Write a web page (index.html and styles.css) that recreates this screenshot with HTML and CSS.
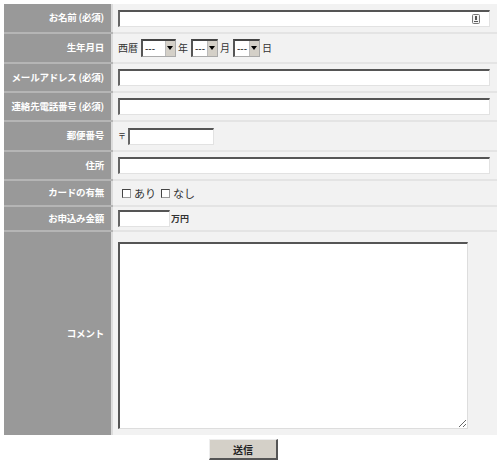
FILE: index.html
```html
<!DOCTYPE html>
<html lang="ja">
<head>
<meta charset="utf-8">
<link rel="stylesheet" href="styles.css">
</head>
<body>
<form class="form">
<table class="tbl">
  <tr class="r1">
    <th>お名前 (必須)</th>
    <td><span class="wrap"><input class="txt full" type="text"><svg class="ime" width="8" height="10" viewBox="0 0 8 10"><rect x="0.5" y="0.5" width="7" height="9" rx="1" fill="#f4f4f4" stroke="#777"/><rect x="3" y="2" width="2" height="4" fill="#555"/><rect x="2" y="7" width="4" height="1" fill="#555"/></svg></span></td>
  </tr>
  <tr class="r2">
    <th>生年月日</th>
    <td><span class="inl">西暦</span><span class="sel w35"><select><option>---</option></select></span><span class="inl">年</span><span class="sel w27"><select><option>---</option></select></span><span class="inl">月</span><span class="sel w27"><select><option>---</option></select></span><span class="inl">日</span></td>
  </tr>
  <tr class="r3">
    <th>メールアドレス (必須)</th>
    <td><input class="txt full" type="text"></td>
  </tr>
  <tr class="r4">
    <th>連絡先電話番号 (必須)</th>
    <td><input class="txt full" type="text"></td>
  </tr>
  <tr class="r5">
    <th>郵便番号</th>
    <td><span class="zip">〒</span><input class="txt zipin" type="text"></td>
  </tr>
  <tr class="r6">
    <th>住所</th>
    <td><input class="txt full" type="text"></td>
  </tr>
  <tr class="r7">
    <th>カードの有無</th>
    <td><label class="chk"><span class="box"></span>あり</label><label class="chk"><span class="box"></span>なし</label></td>
  </tr>
  <tr class="r8">
    <th>お申込み金額</th>
    <td><input class="txt amt" type="text"><span class="unit">万円</span></td>
  </tr>
  <tr class="r9">
    <th>コメント</th>
    <td><textarea class="area"></textarea></td>
  </tr>
</table>
<div class="actions"><button type="button" class="submit">送信</button></div>
</form>
</body>
</html>
```

FILE: styles.css
```css
* { box-sizing: border-box; }
html, body { margin: 0; padding: 0; background: #fff; }
body {
  padding: 4px;
  font-family: "Noto Sans CJK JP", "Liberation Sans", sans-serif;
  font-size: 10px;
  color: #333;
}
.form { margin: 0; }
.tbl {
  width: 493px;
  border-collapse: collapse;
  border-spacing: 0;
}
.tbl th, .tbl td {
  padding: 0;
  vertical-align: middle;
}
.tbl th {
  width: 109px;
  background: #999;
  color: #fff;
  font-weight: bold;
  font-size: 9.5px;
  letter-spacing: -0.2px;
  text-align: right;
  padding-right: 7px;
  white-space: nowrap;
  border-bottom: 2px solid #b5b5b5;
  line-height: 1;
}
.tbl td {
  background: #f2f2f2;
  border-left: 2px solid #dcdcdc;
  border-bottom: 2px solid #e4e4e4;
  padding-left: 5px;
  padding-right: 7px;
  line-height: 1;
}
.r1 th, .r1 td { height: 29px; }
.r2 th, .r2 td { height: 30px; }
.r3 th, .r3 td { height: 29px; }
.r4 th, .r4 td { height: 29px; }
.r5 th, .r5 td { height: 30px; }
.r6 th, .r6 td { height: 29px; }
.r7 th, .r7 td { height: 26px; }
.r8 th, .r8 td { height: 25px; }
.r9 th, .r9 td { height: 204px; border-bottom: 0; }

.txt {
  display: inline-block;
  vertical-align: middle;
  height: 17px;
  margin: 0;
  padding: 0 3px;
  background: #fff;
  border-top: 2px solid #555;
  border-left: 2px solid #666;
  border-right: 1px solid #e2e2e2;
  border-bottom: 1px solid #e2e2e2;
  outline: none;
  font: inherit;
}
.full { width: 372px; }
.wrap { position: relative; display: inline-block; vertical-align: middle; line-height: 0; }
.ime { position: absolute; right: 10px; top: 4px; }

.inl { display: inline-block; vertical-align: middle; margin: 0 3px 0 0; }
.sel {
  position: relative;
  display: inline-block;
  vertical-align: middle;
  height: 18px;
  margin-right: 2px;
  background: #fff;
  border-top: 2px solid #444;
  border-left: 2px solid #555;
  border-right: 1px solid #aaa;
  border-bottom: 1px solid #aaa;
}
.sel select {
  -webkit-appearance: none;
  appearance: none;
  border: 0;
  margin: 0;
  padding: 0 0 0 2px;
  height: 15px;
  width: 100%;
  background: transparent;
  font-family: "Liberation Sans", sans-serif;
  font-size: 10px;
  color: #333;
  outline: none;
}
.sel::after {
  content: "";
  position: absolute;
  top: 0;
  right: 0;
  width: 9px;
  height: 15px;
  background: #d4d0c8;
  border-left: 1px solid #bbb;
}
.sel::before {
  content: "";
  position: absolute;
  z-index: 1;
  top: 5px;
  right: 2px;
  border-left: 3px solid transparent;
  border-right: 3px solid transparent;
  border-top: 4px solid #000;
}
.w35 { width: 35px; }
.w27 { width: 27px; }

.zip { display: inline-block; vertical-align: middle; font-size: 8px; margin-right: 2px; }
.zipin { width: 86px; }

.chk { display: inline-flex; align-items: center; margin-left: 4px; margin-right: 5px; font-size: 11px; }
.chk + .chk { margin-left: 0; }
.box {
  display: inline-block;
  width: 9px;
  height: 9px;
  border: 1px solid #444;
  border-right-color: #999;
  border-bottom-color: #999;
  background: #fff;
  margin-right: 3px;
}

.amt { width: 52px; }
.unit { display: inline-block; vertical-align: middle; font-weight: bold; font-size: 9px; margin-left: 1px; }

.area {
  display: block;
  width: 350px;
  height: 187px;
  margin: 3px 0 0 0;
  padding: 2px;
  background: #fff;
  border-top: 2px solid #555;
  border-left: 2px solid #555;
  border-right: 1px solid #ddd;
  border-bottom: 1px solid #ddd;
  resize: both;
  outline: none;
  font: inherit;
}

.actions { padding: 4px 0 0 205px; line-height: 0; }
.submit {
  width: 69px;
  height: 21px;
  margin: 0;
  padding: 0;
  background: #d4d0c8;
  border-top: 1px solid #eee;
  border-left: 1px solid #eee;
  border-right: 2px solid #555;
  border-bottom: 2px solid #555;
  font-family: "Noto Sans CJK JP", sans-serif;
  font-size: 10px;
  font-weight: bold;
  color: #222;
}
```
